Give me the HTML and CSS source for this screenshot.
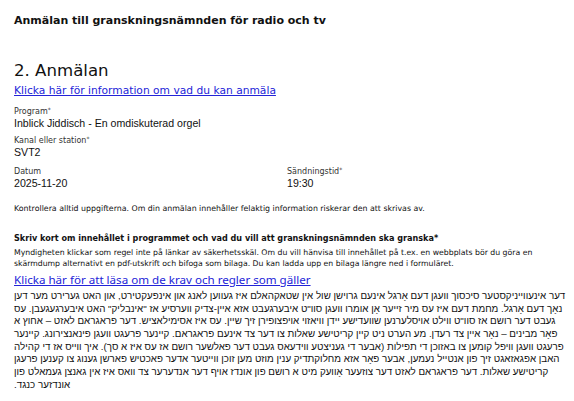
FILE: index.html
```html
<!DOCTYPE html>
<html lang="sv">
<head>
<meta charset="utf-8">
<title>Anmälan till granskningsnämnden för radio och tv</title>
<link rel="stylesheet" href="styles.css">
</head>
<body>
<div class="page">
  <header class="site-title">Anmälan till granskningsnämnden för radio och tv</header>
  <main class="form">
    <h1 class="step">2. Anmälan</h1>
    <a class="link-info" href="#">Klicka här för information om vad du kan anmäla</a>

    <div class="field field-first">
      <div class="label">Program<span class="req">*</span></div>
      <div class="value">Inblick Jiddisch - En omdiskuterad orgel</div>
    </div>
    <div class="field">
      <div class="label">Kanal eller station<span class="req">*</span></div>
      <div class="value">SVT2</div>
    </div>
    <div class="field-row">
      <div class="field">
        <div class="label">Datum</div>
        <div class="value">2025-11-20</div>
      </div>
      <div class="field">
        <div class="label">Sändningstid<span class="req">*</span></div>
        <div class="value">19:30</div>
      </div>
    </div>

    <p class="note">Kontrollera alltid uppgifterna. Om din anmälan innehåller felaktig information riskerar den att skrivas av.</p>

    <h2 class="question">Skriv kort om innehållet i programmet och vad du vill att granskningsnämnden ska granska*</h2>
    <p class="help">Myndigheten klickar som regel inte på länkar av säkerhetsskäl. Om du vill hänvisa till innehållet på t.ex. en webbplats bör du göra en skärmdump alternativt en pdf-utskrift och bifoga som bilaga. Du kan ladda upp en bilaga längre ned i formuläret.</p>
    <a class="link-rules" href="#">Klicka här för att läsa om de krav och regler som gäller</a>

    <div class="answer" dir="rtl" lang="yi">דער אינעווייניקסטער סיכסוך וועגן דעם אָרגל אינעם גרוישן שול אין שטאקהאלם איז געווען לאנג און אינפעקטירט, און האט גערירט מער דען נאָך דעם אָרגל. מחמת דעם איז עס מיר זייער אָן אומרו וועגן סוו"ט איבערגעבט אזא איין-צדיק ווערסיע אז "אינבליק" האט איבערגעגעבן. עס געבט דער רושם אז סוו"ט ווילט אויסלערנען שוועדישע יידן וויאזוי אויפצופירן זיך שיין. עס איז אסימילאציש. דער פראגראם לאזט – אחוץ א פאָר מבינים – נאָר איין צד רעדן. מע הערט ניט קיין קריטישע שאלות צו דער צד אינעם פראגראם. קיינער פרעגט וועגן פינאנצירונג. קיינער פרעגט וועגן וויפל קומען צו באזוכן די תפילות (אבער די געניצטע ווידעאס געבט דער פאלשער רושם אז עס איז א סך). איך ווייס אז די קהילה האבן אפגאזאגט זיך פון אנטייל נעמען, אבער פאָר אזא מחלוקתדיק ענין מוזט מען זוכן ווייטער אדער פאכטיש פארשן גענוג צו קענען פרעגן קריטישע שאלות. דער פראגראם לאזט דער צוזעער אָוועק מיט א רושם פון אונדז אויף דער אנדערער צד וואס איז אין גאנצן געמאלט פון אונדזער כנגד.</div>
  </main>
</div>
</body>
</html>
```

FILE: styles.css
```css
html, body {
  margin: 0;
  padding: 0;
  background: #ffffff;
  color: #111111;
}

.page {
  width: 574px;
  min-height: 401px;
  overflow: hidden;
}

.site-title {
  padding: 13px 0 0 14px;
  font-family: "DejaVu Sans", sans-serif;
  font-weight: bold;
  font-size: 11px;
  line-height: 15px;
  color: #111111;
}

.form {
  display: flex;
  flex-direction: column;
  align-items: flex-start;
  padding: 0 0 0 14px;
}

.step {
  margin: 33px 0 0 0;
  font-family: "DejaVu Sans", sans-serif;
  font-weight: normal;
  font-size: 16.6px;
  line-height: 20px;
  color: #111111;
}

.link-info {
  display: block;
  margin-top: 3px;
  font-family: "DejaVu Sans", sans-serif;
  font-size: 10.7px;
  line-height: 14px;
  color: #2323d8;
}

.field {
  display: flex;
  flex-direction: column;
  margin-top: 5px;
}

.field-first {
  margin-top: 7.5px;
}

.field-row {
  display: grid;
  grid-template-columns: 273px auto;
  margin-top: 7.7px;
}

.field-row .field {
  margin-top: 0;
}

.label {
  font-family: "DejaVu Sans", sans-serif;
  font-size: 8px;
  line-height: 11px;
  color: #333333;
}

.req {
  font-size: 6px;
  vertical-align: 2px;
  line-height: 0;
}

.value {
  font-family: "Liberation Sans", Arial, sans-serif;
  font-size: 10.6px;
  line-height: 13px;
  color: #111111;
}

.note {
  margin: 12.8px 0 0 0;
  font-family: "DejaVu Sans", sans-serif;
  font-size: 7.85px;
  line-height: 12px;
  color: #111111;
}

.question {
  margin: 16.7px 0 0 0;
  font-family: "DejaVu Sans", sans-serif;
  font-weight: bold;
  font-size: 8.1px;
  line-height: 12px;
  color: #111111;
}

.help {
  width: 540px;
  margin: 3.3px 0 0 0;
  font-family: "DejaVu Sans", sans-serif;
  font-size: 7.75px;
  line-height: 11.5px;
  color: #111111;
}

.link-rules {
  display: block;
  margin-top: 3px;
  font-family: "Noto Sans", sans-serif;
  font-size: 11.6px;
  line-height: 14px;
  color: #2323d8;
}

.answer {
  width: 559px;
  margin-top: 3px;
  font-family: "Liberation Sans", "DejaVu Sans", sans-serif;
  font-size: 9.8px;
  line-height: 12.7px;
  text-align: left;
  color: #111111;
}
```
